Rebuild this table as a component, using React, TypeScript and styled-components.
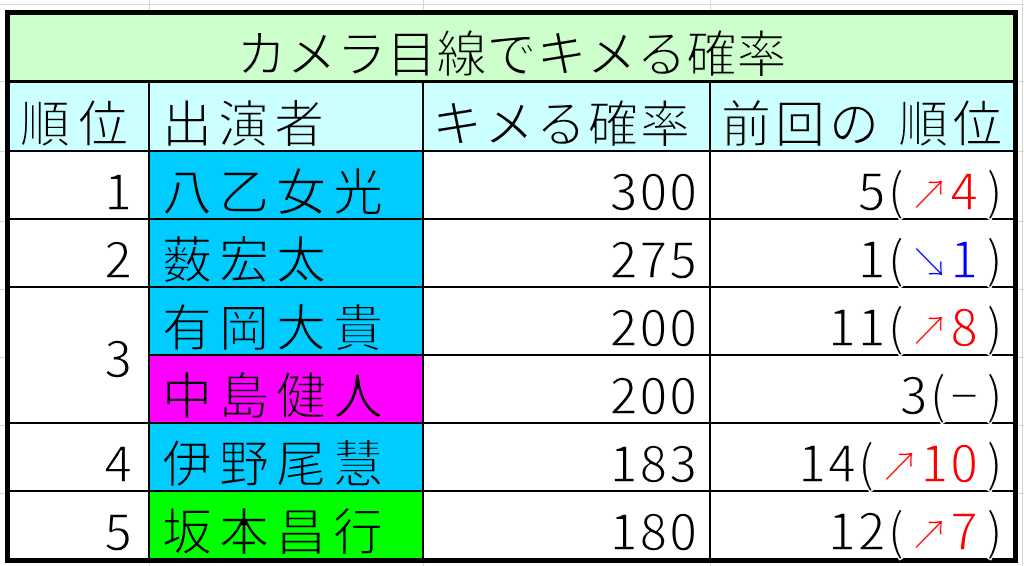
import React from "react";
import styled, { createGlobalStyle } from "styled-components";

const Global = createGlobalStyle`
  html, body { margin: 0; padding: 0; background: #fff; }
  body { font-family: "Noto Sans CJK JP", "Noto Sans", sans-serif; color: #000; }
`;

const line = (x: number) => `linear-gradient(#d6d6d6, #d6d6d6) ${x}px 0 / 1px 100% no-repeat`;
const hline = (y: number) => `linear-gradient(#d6d6d6, #d6d6d6) 0 ${y}px / 100% 1px no-repeat`;

const Page = styled.div`
  width: 1024px;
  height: 566px;
  box-sizing: border-box;
  padding: 10px 0 0 5px;
  overflow: hidden;
  background: ${[149, 423, 710, 1022].map(line).join(", ")},
    ${[4, 81, 151, 221, 289, 357, 425, 493].map(hline).join(", ")};
`;

const Table = styled.div`
  width: 1013px;
  box-sizing: border-box;
  border: 5px solid #000;
  background: #000;
  display: flex;
  flex-direction: column;
  gap: 3px;
`;

const Title = styled.div`
  height: 65px;
  box-sizing: border-box;
  padding-bottom: 5px;
  background: #ccffcc;
  display: flex;
  justify-content: center;
  align-items: flex-end;
  font-size: 50px;
  line-height: 1;
  -webkit-text-stroke: 1.3px #ccffcc;
`;

const Grid = styled.div`
  display: grid;
  grid-template-columns: 138px 272px 285px 302px;
  grid-template-rows: 67px repeat(6, 66px);
  gap: 2px;
`;

const Cell = styled.div<{
  $bg?: string;
  $right?: boolean;
  $span?: number;
  $center?: boolean;
  $pad?: number;
  $ls?: number;
}>`
  background: ${(p) => p.$bg || "#fff"};
  display: flex;
  align-items: ${(p) => (p.$center ? "center" : "flex-end")};
  justify-content: ${(p) => (p.$right ? "flex-end" : "flex-start")};
  box-sizing: border-box;
  padding: ${(p) => (p.$center ? "0" : "0 0 5px 0")};
  padding-left: ${(p) => (p.$right ? 0 : p.$pad ?? 10)}px;
  padding-right: ${(p) => (p.$right ? p.$pad ?? 12 : 0)}px;
  grid-row: ${(p) => (p.$span ? `span ${p.$span}` : "auto")};
  font-size: 50px;
  line-height: 1;
  letter-spacing: ${(p) => p.$ls ?? 0}px;
  white-space: nowrap;
  -webkit-text-stroke: 1.3px ${(p) => p.$bg || "#fff"};
`;

const Num = styled.span`
  letter-spacing: 2px;
`;

const Paren = styled.span<{ $side: "l" | "r" }>`
  margin: ${(p) => (p.$side === "l" ? "0 2px 0 0" : "0 0 0 6px")};
`;

const Change = styled.span<{ $color: string }>`
  color: ${(p) => p.$color};
`;

const Arrow = styled.span`
  font-size: 42px;
  letter-spacing: 0;
`;

type Row = {
  rank?: string;
  span?: number;
  name: string;
  bg: string;
  score: string;
  prev: string;
  arrow?: string;
  diff: string;
  color: string;
};

const rows: Row[] = [
  { rank: "1", name: "八乙女光", bg: "#00ccff", score: "300", prev: "5", arrow: "↗", diff: "4", color: "#ff0000" },
  { rank: "2", name: "薮宏太", bg: "#00ccff", score: "275", prev: "1", arrow: "↘", diff: "1", color: "#0000ff" },
  { rank: "3", span: 2, name: "有岡大貴", bg: "#00ccff", score: "200", prev: "11", arrow: "↗", diff: "8", color: "#ff0000" },
  { name: "中島健人", bg: "#ff00ff", score: "200", prev: "3", diff: "−", color: "#000" },
  { rank: "4", name: "伊野尾慧", bg: "#00ccff", score: "183", prev: "14", arrow: "↗", diff: "10", color: "#ff0000" },
  { rank: "5", name: "坂本昌行", bg: "#00ff00", score: "180", prev: "12", arrow: "↗", diff: "7", color: "#ff0000" },
];

export default function App() {
  return (
    <>
      <Global />
      <Page>
        <Table>
          <Title>カメラ目線でキメる確率</Title>
          <Grid>
            <Cell $bg="#ccffff" $pad={10} $ls={8}>順位</Cell>
            <Cell $bg="#ccffff" $pad={12} $ls={6}>出演者</Cell>
            <Cell $bg="#ccffff" $pad={8} $ls={2}>キメる確率</Cell>
            <Cell $bg="#ccffff" $pad={10} $ls={4}>前回の 順位</Cell>
            {rows.map((r, i) => (
              <React.Fragment key={i}>
                {r.rank && (
                  <Cell $right $pad={14} $span={r.span} $center={!!r.span}>
                    <Num>{r.rank}</Num>
                  </Cell>
                )}
                <Cell $bg={r.bg} $pad={12} $ls={7}>
                  {r.name}
                </Cell>
                <Cell $right $pad={10}>
                  <Num>{r.score}</Num>
                </Cell>
                <Cell $right $pad={8}>
                  <Num>
                    {r.prev}
                    <Paren $side="l">(</Paren>
                    <Change $color={r.color}>
                      {r.arrow && <Arrow>{r.arrow}</Arrow>}
                      {r.diff}
                    </Change>
                    <Paren $side="r">)</Paren>
                  </Num>
                </Cell>
              </React.Fragment>
            ))}
          </Grid>
        </Table>
      </Page>
    </>
  );
}
